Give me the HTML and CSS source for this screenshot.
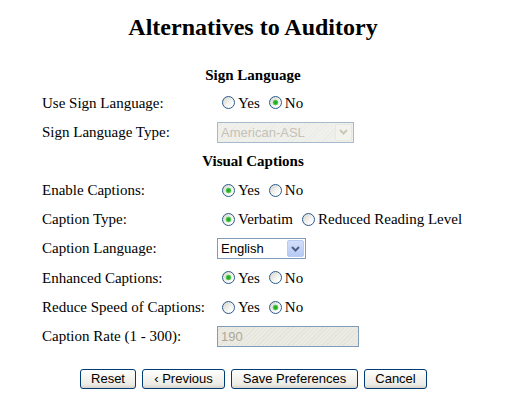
FILE: index.html
```html
<!DOCTYPE html>
<html>
<head>
<meta charset="utf-8">
<title>Alternatives to Auditory</title>
<link rel="stylesheet" href="styles.css">
</head>
<body>
<div class="page">
  <h1 class="title">Alternatives to Auditory</h1>
  <form class="form">
    <div class="section">Sign Language</div>

    <div class="label">Use Sign Language:</div>
    <div class="control opts">
      <label class="opt"><input type="radio" class="radio" name="sl">Yes</label>
      <label class="opt"><input type="radio" class="radio" name="sl" checked>No</label>
    </div>

    <div class="label">Sign Language Type:</div>
    <div class="control">
      <span class="selectbox selectbox-wide is-disabled">
        <select class="select" disabled><option>American-ASL</option></select>
        <span class="arrow"><svg width="9" height="6" viewBox="0 0 9 6"><polyline points="1,1 4.5,4.5 8,1" fill="none" stroke-width="2"/></svg></span>
      </span>
    </div>

    <div class="section">Visual Captions</div>

    <div class="label">Enable Captions:</div>
    <div class="control opts">
      <label class="opt"><input type="radio" class="radio" name="ec" checked>Yes</label>
      <label class="opt"><input type="radio" class="radio" name="ec">No</label>
    </div>

    <div class="label">Caption Type:</div>
    <div class="control opts">
      <label class="opt"><input type="radio" class="radio" name="ct" checked>Verbatim</label>
      <label class="opt"><input type="radio" class="radio" name="ct">Reduced Reading Level</label>
    </div>

    <div class="label">Caption Language:</div>
    <div class="control">
      <span class="selectbox selectbox-narrow">
        <select class="select"><option>English</option></select>
        <span class="arrow"><svg width="9" height="6" viewBox="0 0 9 6"><polyline points="1,1 4.5,4.5 8,1" fill="none" stroke-width="2"/></svg></span>
      </span>
    </div>

    <div class="label">Enhanced Captions:</div>
    <div class="control opts">
      <label class="opt"><input type="radio" class="radio" name="eh" checked>Yes</label>
      <label class="opt"><input type="radio" class="radio" name="eh">No</label>
    </div>

    <div class="label">Reduce Speed of Captions:</div>
    <div class="control opts">
      <label class="opt"><input type="radio" class="radio" name="rs">Yes</label>
      <label class="opt"><input type="radio" class="radio" name="rs" checked>No</label>
    </div>

    <div class="label">Caption Rate (1 - 300):</div>
    <div class="control">
      <input type="text" class="textbox" value="190" disabled>
    </div>
  </form>

  <div class="buttons">
    <button type="button" class="btn btn-reset">Reset</button>
    <button type="button" class="btn btn-prev">‹ Previous</button>
    <button type="button" class="btn btn-save">Save Preferences</button>
    <button type="button" class="btn btn-cancel">Cancel</button>
  </div>
</div>
</body>
</html>
```

FILE: styles.css
```css
html, body {
  margin: 0;
  padding: 0;
  background: #ffffff;
}

body {
  font-family: "Liberation Serif", "Times New Roman", serif;
  font-size: 15px;
  color: #000000;
}

.page {
  width: 506px;
}

.title {
  margin: 0;
  padding-top: 13px;
  height: 48px;
  font-size: 24px;
  line-height: 28px;
  font-weight: bold;
  text-align: center;
}

.form {
  width: 422px;
  margin: 0 auto;
  display: grid;
  grid-template-columns: 175px 1fr;
  grid-template-rows: 28px 28px 30px 29px 29px 29px 29px 30px 29px 29px;
  align-items: center;
}

.section {
  grid-column: 1 / span 2;
  text-align: center;
  font-weight: bold;
  font-size: 15px;
}

.label {
  white-space: nowrap;
}

.control {
  display: flex;
  align-items: center;
}

.opts {
  padding-left: 5px;
  gap: 9px;
}

.opt {
  display: inline-flex;
  align-items: center;
  gap: 3px;
  white-space: nowrap;
}

.radio {
  -webkit-appearance: none;
  appearance: none;
  box-sizing: border-box;
  width: 13px;
  height: 13px;
  margin: 0 0 1px 0;
  border: 1px solid #2b5a8c;
  border-radius: 50%;
  background: linear-gradient(135deg, #d6d6ce 0%, #eeeeea 45%, #ffffff 80%);
  flex: none;
}

.radio:checked {
  background:
    radial-gradient(circle at 50% 50%, #21a121 0, #2cb82c 1.6px, #6fd36f 2.6px, rgba(255,255,255,0) 3.2px),
    linear-gradient(135deg, #d6d6ce 0%, #eeeeea 45%, #ffffff 80%);
}

.selectbox {
  position: relative;
  display: inline-block;
  height: 21px;
}

.selectbox-wide { width: 137px; }
.selectbox-narrow { width: 89px; }

.select {
  -webkit-appearance: none;
  appearance: none;
  box-sizing: border-box;
  width: 100%;
  height: 21px;
  margin: 0;
  padding: 0 0 0 3px;
  border: 1px solid #7f9db9;
  border-radius: 0;
  background: #ffffff;
  font-family: "Liberation Sans", Arial, sans-serif;
  font-size: 13px;
  color: #000000;
  outline: none;
}

.is-disabled .select {
  color: #aca899;
  background: repeating-linear-gradient(135deg, #ebebe4 0, #ebebe4 2px, #e4e4dc 2px, #e4e4dc 3px);
}

.arrow {
  position: absolute;
  top: 2px;
  right: 2px;
  box-sizing: border-box;
  width: 17px;
  height: 17px;
  border: 1px solid #b9cbf3;
  border-radius: 2px;
  background: linear-gradient(#d3defb, #b7caf5);
  display: flex;
  align-items: center;
  justify-content: center;
  pointer-events: none;
}

.arrow svg polyline {
  stroke: #4d6185;
}

.is-disabled .arrow {
  border-color: #e8e8e1;
  background: #f3f3ee;
}

.is-disabled .arrow svg polyline {
  stroke: #c9c7ba;
}

.textbox {
  box-sizing: border-box;
  width: 142px;
  height: 21px;
  margin: 0;
  padding: 0 0 0 3px;
  border: 1px solid #7f9db9;
  font-family: "Liberation Sans", Arial, sans-serif;
  font-size: 13px;
  color: #aca899;
  background: repeating-linear-gradient(135deg, #ebebe4 0, #ebebe4 2px, #e4e4dc 2px, #e4e4dc 3px);
}

.buttons {
  display: flex;
  justify-content: center;
  gap: 6px;
  margin-top: 18px;
  padding-left: 1px;
}

.btn {
  box-sizing: border-box;
  height: 20px;
  margin: 0;
  padding: 0;
  border: 1px solid #003c74;
  border-radius: 3px;
  background: linear-gradient(#ffffff 0%, #f5f4ef 40%, #ecebe5 80%, #d8d3c8 100%);
  font-family: "Liberation Sans", Arial, sans-serif;
  font-size: 13px;
  line-height: 18px;
  color: #000000;
  text-align: center;
  white-space: nowrap;
}

.btn-reset { width: 56px; }
.btn-prev { width: 83px; }
.btn-save { width: 127px; }
.btn-cancel { width: 63px; }
```
